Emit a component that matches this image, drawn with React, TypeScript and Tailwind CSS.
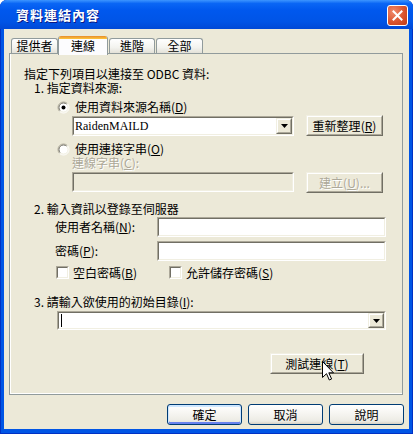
import type { ReactNode } from "react";

function Key({ k }: { k: string }) {
  return (
    <>
      (<span className="underline underline-offset-[1px]">{k}</span>)
    </>
  );
}

function Sunken({ className, inner, children }: { className: string; inner: string; children?: ReactNode }) {
  return (
    <div className={`border border-t-[#aca899] border-l-[#aca899] border-r-white border-b-white ${className}`}>
      <div
        className={`h-full border border-t-[#716f64] border-l-[#716f64] border-r-[#f1efe2] border-b-[#f1efe2] ${inner}`}
      >
        {children}
      </div>
    </div>
  );
}

function Raised({ className, children }: { className: string; children?: ReactNode }) {
  return (
    <div
      className={`border border-t-[#f1efe2] border-l-[#f1efe2] border-r-[#716f64] border-b-[#716f64] bg-[#ece9d8] ${className}`}
    >
      <div className="flex h-full items-center justify-center border border-t-white border-l-white border-r-[#aca899] border-b-[#aca899]">
        {children}
      </div>
    </div>
  );
}

function Arrow() {
  return (
    <svg width="7" height="4" viewBox="0 0 7 4">
      <path d="M0 0h7L3.5 4z" fill="#000" />
    </svg>
  );
}

function Radio({ checked }: { checked?: boolean }) {
  return (
    <svg width="13" height="13" viewBox="0 0 13 13" className="shrink-0">
      <circle cx="6.5" cy="6.5" r="5" fill="#fff" />
      <path d="M2.6 10.4A5.5 5.5 0 0 1 10.4 2.6" fill="none" stroke="#aca899" />
      <path d="M3.3 9.7A4.5 4.5 0 0 1 9.7 3.3" fill="none" stroke="#716f64" />
      <path d="M10.4 2.6A5.5 5.5 0 0 1 2.6 10.4" fill="none" stroke="#fff" />
      <path d="M9.7 3.3A4.5 4.5 0 0 1 3.3 9.7" fill="none" stroke="#f1efe2" />
      {checked && <circle cx="6.5" cy="6.5" r="2" fill="#000" />}
    </svg>
  );
}

function Check() {
  return (
    <div className="h-[13px] w-[13px] shrink-0 border border-t-[#aca899] border-l-[#aca899] border-r-white border-b-white">
      <div className="h-full border border-t-[#716f64] border-l-[#716f64] border-r-[#f1efe2] border-b-[#f1efe2] bg-white" />
    </div>
  );
}

function XpButton({ label, primary }: { label: string; primary?: boolean }) {
  return (
    <div
      className={`flex h-[21px] w-[75px] items-center justify-center rounded-[3px] border border-[#003c74] bg-[linear-gradient(to_bottom,#ffffff_0%,#f6f5f1_45%,#ecebe4_85%,#d6d0c5_100%)] text-[12px] ${
        primary ? "shadow-[inset_0_1px_0_1px_#cee7ff,inset_0_-1px_0_1px_#6982ee]" : ""
      }`}
    >
      {label}
    </div>
  );
}

function Tab({ label, w, ml }: { label: string; w: string; ml: string }) {
  return (
    <div
      className={`flex h-[15px] items-center justify-center rounded-t-[3px] border border-b-0 border-[#919b9c] bg-[linear-gradient(to_bottom,#ffffff,#f3f3ef_60%,#e3e1d8)] ${w} ${ml}`}
    >
      {label}
    </div>
  );
}

export default function App() {
  return (
    <div className="relative flex h-[434px] w-[413px] flex-col overflow-hidden rounded-t-[7px] bg-[#0055e5] font-['Noto_Sans_CJK_TC','Noto_Sans',sans-serif] text-[12px] leading-[14px] text-black shadow-[inset_1px_0_0_#0031c4,inset_-1px_0_0_#0031c4,inset_0_-1px_0_#0031c4]">
      {/* title bar */}
      <div className="flex h-[29px] shrink-0 items-center bg-[linear-gradient(to_bottom,#3d95ff_0%,#0a66f5_12%,#0058ee_35%,#0054e6_75%,#0049d6_100%)] pl-[16px] pr-[5px]">
        <span className="flex-1 text-[13px] font-bold tracking-[1px] text-white [text-shadow:1px_1px_0_#0a1883]">
          資料連結內容
        </span>
        <div className="mt-[2px] flex h-[21px] w-[21px] items-center justify-center rounded-[3px] border border-white bg-[radial-gradient(circle_at_30%_30%,#f08a6c,#d9542f_55%,#c13a14)]">
          <svg width="11" height="11" viewBox="0 0 11 11">
            <path d="M1.5 1.5l8 8M9.5 1.5l-8 8" stroke="#fff" strokeWidth="2" strokeLinecap="square" />
          </svg>
        </div>
      </div>

      {/* client */}
      <div className="ml-[4px] mb-[5px] flex h-[400px] w-[405px] flex-col bg-[#ece9d8]">
        {/* tabs */}
        <div className="relative z-10 flex h-[25px] items-end pt-[7px]">
          <Tab label="提供者" w="w-[47px]" ml="ml-[7px] mb-[1px]" />
          <div className="-mb-px flex h-[19px] w-[50px] flex-col overflow-hidden rounded-t-[3px] border-x border-[#919b9c] bg-[#fcfcfe]">
            <div className="h-[3px] bg-[linear-gradient(to_bottom,#e68b2c,#ffc73c)]" />
            <div className="flex flex-1 items-center justify-center pb-[2px]">連線</div>
          </div>
          <Tab label="進階" w="w-[46px]" ml="ml-[1px] mb-[1px]" />
          <Tab label="全部" w="w-[47px]" ml="ml-[1px] mb-[1px]" />
        </div>

        {/* panel */}
        <div className="-mt-[1px] ml-[5px] flex h-[342px] w-[394px] flex-col border border-[#919b9c] shadow-[inset_1px_0_0_#fff,inset_0_-1px_0_#fff]">
          <div className="ml-[14px] mt-[13px] h-[14px]">指定下列項目以連接至 ODBC 資料:</div>
          <div className="ml-[24px] h-[14px]">1. 指定資料來源:</div>

          <div className="ml-[47px] mt-[5px] flex h-[14px] items-center gap-[5px]">
            <Radio checked />
            <span>
              使用資料來源名稱<Key k="D" />
            </span>
          </div>

          <div className="ml-[62px] mt-[1px] flex h-[21px]">
            <Sunken className="mt-px h-[20px] w-[222px]" inner="flex bg-white">
              <span className="flex-1 pl-[1px] font-['Liberation_Serif',serif] text-[12px] leading-[16px]">
                RaidenMAILD
              </span>
              <Raised className="h-full w-[16px]">
                <Arrow />
              </Raised>
            </Sunken>
            <Raised className="ml-[12px] h-[21px] w-[77px]">
              <span>
                重新整理<Key k="R" />
              </span>
            </Raised>
          </div>

          <div className="ml-[47px] mt-[6px] flex h-[14px] items-center gap-[5px]">
            <Radio />
            <span>
              使用連接字串<Key k="O" />
            </span>
          </div>

          <div className="ml-[62px] h-[14px] text-[#aca899] [text-shadow:1px_1px_0_#fff]">
            連線字串<Key k="C" />:
          </div>

          <div className="ml-[62px] mt-[2px] flex h-[21px]">
            <Sunken className="h-[20px] w-[222px]" inner="bg-[#ece9d8]" />
            <Raised className="ml-[12px] h-[21px] w-[77px]">
              <span className="text-[#aca899] [text-shadow:1px_1px_0_#fff]">
                建立<Key k="U" />...
              </span>
            </Raised>
          </div>

          <div className="ml-[24px] mt-[9px] h-[14px]">2. 輸入資訊以登錄至伺服器</div>

          <div className="ml-[45px] mt-[1px] flex h-[20px] items-center">
            <span className="w-[102px]">
              使用者名稱<Key k="N" />:
            </span>
            <Sunken className="h-[20px] w-[229px]" inner="bg-white" />
          </div>

          <div className="ml-[45px] mt-[4px] flex h-[20px] items-center">
            <span className="w-[102px]">
              密碼<Key k="P" />:
            </span>
            <Sunken className="h-[20px] w-[229px]" inner="bg-white" />
          </div>

          <div className="ml-[46px] mt-[5px] flex h-[13px] items-center">
            <div className="flex w-[113px] items-center gap-[4px]">
              <Check />
              <span>
                空白密碼<Key k="B" />
              </span>
            </div>
            <div className="flex items-center gap-[4px]">
              <Check />
              <span>
                允許儲存密碼<Key k="S" />
              </span>
            </div>
          </div>

          <div className="ml-[24px] mt-[16px] h-[14px]">
            3. 請輸入欲使用的初始目錄<Key k="I" />:
          </div>

          <Sunken className="ml-[47px] mt-[2px] h-[19px] w-[329px]" inner="flex items-center bg-white">
            <div className="ml-[2px] h-[13px] w-px flex-none bg-black" />
            <div className="flex-1" />
            <Raised className="h-full w-[16px]">
              <Arrow />
            </Raised>
          </Sunken>

          <Raised className="ml-[260px] mt-[23px] h-[21px] w-[94px]">
            <span>
              測試連線<Key k="T" />
            </span>
          </Raised>
        </div>

        {/* dialog buttons */}
        <div className="mt-[9px] flex justify-end gap-[6px] pr-[5px]">
          <XpButton label="確定" primary />
          <XpButton label="取消" />
          <XpButton label="說明" />
        </div>
      </div>

      {/* mouse pointer */}
      <svg className="absolute left-[322px] top-[361px]" width="12" height="20" viewBox="0 0 12 20">
        <path d="M0.5 0.5V16.5L4.5 12.7L7.3 19L9.6 18L6.8 11.8H11.5Z" fill="#fff" stroke="#000" strokeLinejoin="miter" />
      </svg>
    </div>
  );
}
